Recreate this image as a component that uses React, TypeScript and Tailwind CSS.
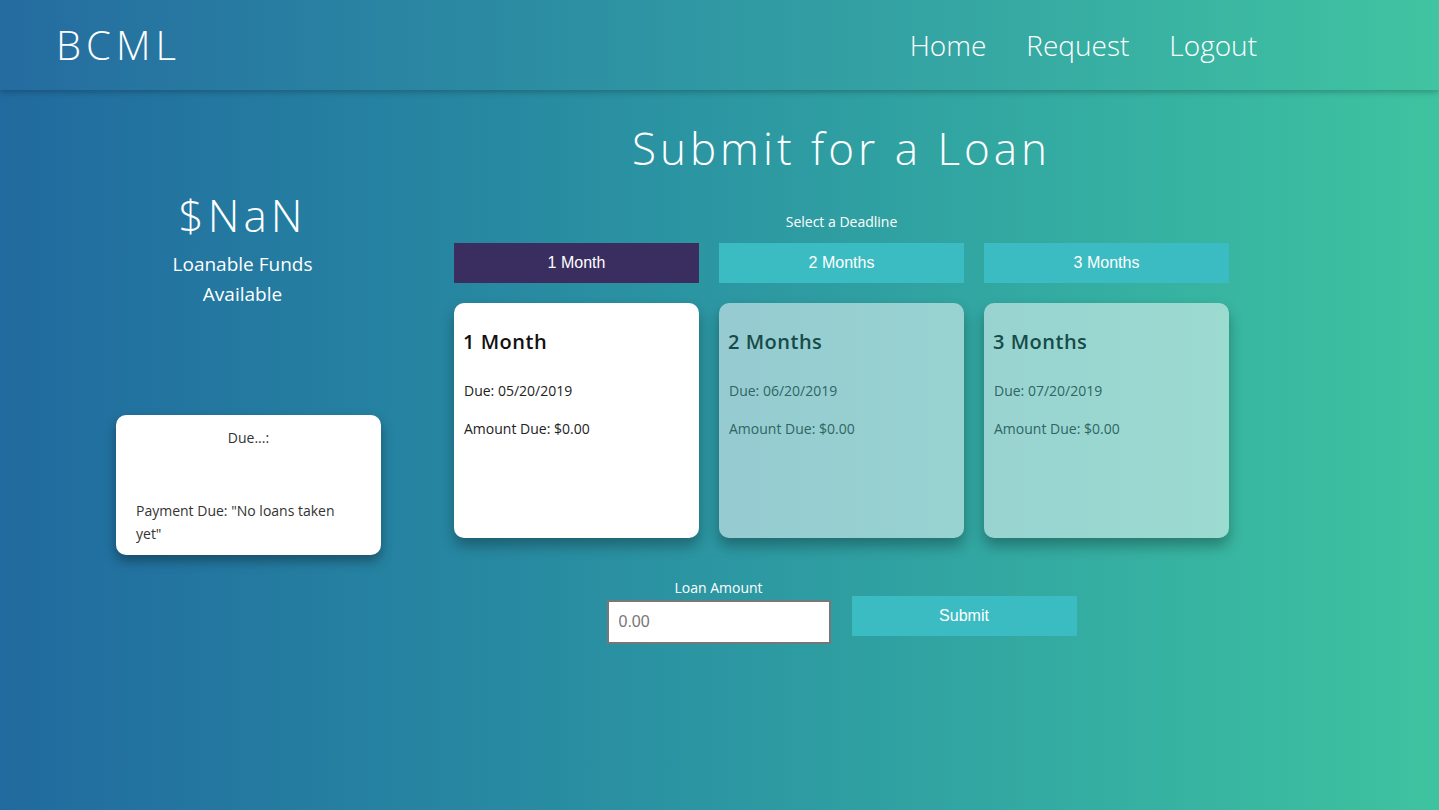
import React, { useState } from "react";

const deadlines = [
  { label: "1 Month", title: "1 Month", due: "05/20/2019" },
  { label: "2 Months", title: "2 Months", due: "06/20/2019" },
  { label: "3 Months", title: "3 Months", due: "07/20/2019" },
];

export default function App() {
  const [selected, setSelected] = useState(0);
  const [amount, setAmount] = useState("");

  return (
    <div
      className="min-h-[810px] w-full bg-gradient-to-r from-[#216a9f] to-[#3ec3a0] text-white"
      style={{ fontFamily: '"Open Sans", "Noto Sans", sans-serif' }}
    >
      <header className="flex h-[90px] items-center justify-between bg-white/[0.02] pl-[56px] pr-[182px] shadow-[0_2px_6px_rgba(0,0,0,0.25)]">
        <div className="text-[40px] font-light tracking-[5px]">BCML</div>
        <nav className="flex gap-[40px] text-[28px] font-light">
          <a href="#">Home</a>
          <a href="#">Request</a>
          <a href="#">Logout</a>
        </nav>
      </header>

      <main className="flex pl-[116px]">
        {/* left column */}
        <div className="flex w-[265px] flex-col items-center pt-[97px]">
          <div className="flex flex-col items-center pr-[12px]">
            <div className="text-[44px] font-light leading-[56px] tracking-[4px]">$NaN</div>
            <div className="mt-[6px] w-[150px] text-center text-[19px] leading-[30px]">
              Loanable Funds Available
            </div>
          </div>
          <div className="mt-[106px] h-[140px] w-[265px] rounded-[10px] bg-white pl-[20px] pr-[40px] pt-[12px] text-[14px] text-[#333] shadow-[0_6px_12px_rgba(0,0,0,0.35)]">
            <div className="pl-[20px] text-center">Due...:</div>
            <div className="mt-[51px] leading-[23px]">Payment Due: "No loans taken yet"</div>
          </div>
        </div>

        {/* right column */}
        <div className="ml-[73px] flex w-[775px] flex-col items-center">
          <h1 className="mt-[30px] text-[44px] font-light leading-[56px] tracking-[4px]">Submit for a Loan</h1>
          <div className="mt-[36px] text-[14px] leading-[19px]">Select a Deadline</div>
          <div className="mt-[12px] grid w-full grid-cols-3 gap-[20px]">
            {deadlines.map((d, i) => (
              <button
                key={d.label}
                onClick={() => setSelected(i)}
                className={`h-[40px] text-[16px] ${i === selected ? "bg-[#3a2e61]" : "bg-[#3bbcc2]"}`}
                style={{ fontFamily: '"Liberation Sans", Arial, sans-serif' }}
              >
                {d.label}
              </button>
            ))}
          </div>
          <div className="mt-[20px] grid w-full grid-cols-3 gap-[20px]">
            {deadlines.map((d, i) => (
              <div
                key={d.title}
                className={`h-[235px] rounded-[10px] px-[9px] pt-[25px] shadow-[0_8px_14px_rgba(0,0,0,0.3)] ${i === selected ? "bg-white text-[#111]" : "bg-white/50 text-[#164b49]"}`}
              >
                <div className="text-[20px] font-semibold leading-[28px] tracking-[0.5px]">{d.title}</div>
                <div className={`mt-[24px] pl-[1px] text-[14px] ${i === selected ? "text-[#222]" : "text-[#2f6563]"}`}>Due: {d.due}</div>
                <div className={`mt-[17px] pl-[1px] text-[14px] ${i === selected ? "text-[#222]" : "text-[#2f6563]"}`}>Amount Due: $0.00</div>
              </div>
            ))}
          </div>
          <div className="mt-[38px] flex items-start gap-[21px]">
            <div className="flex flex-col items-center">
              <label className="text-[14px] leading-[24px]">Loan Amount</label>
              <input
                value={amount}
                onChange={(e) => setAmount(e.target.value)}
                placeholder="0.00"
                className="h-[44px] w-[224px] border-2 border-[#777] bg-white px-[10px] text-[16px] text-[#333] placeholder:text-[#777]"
                style={{ fontFamily: '"Liberation Sans", Arial, sans-serif' }}
              />
            </div>
            <button
              className="mt-[20px] h-[40px] w-[225px] bg-[#3bbcc2] text-[16px]"
              style={{ fontFamily: '"Liberation Sans", Arial, sans-serif' }}
            >
              Submit
            </button>
          </div>
        </div>
      </main>
    </div>
  );
}
